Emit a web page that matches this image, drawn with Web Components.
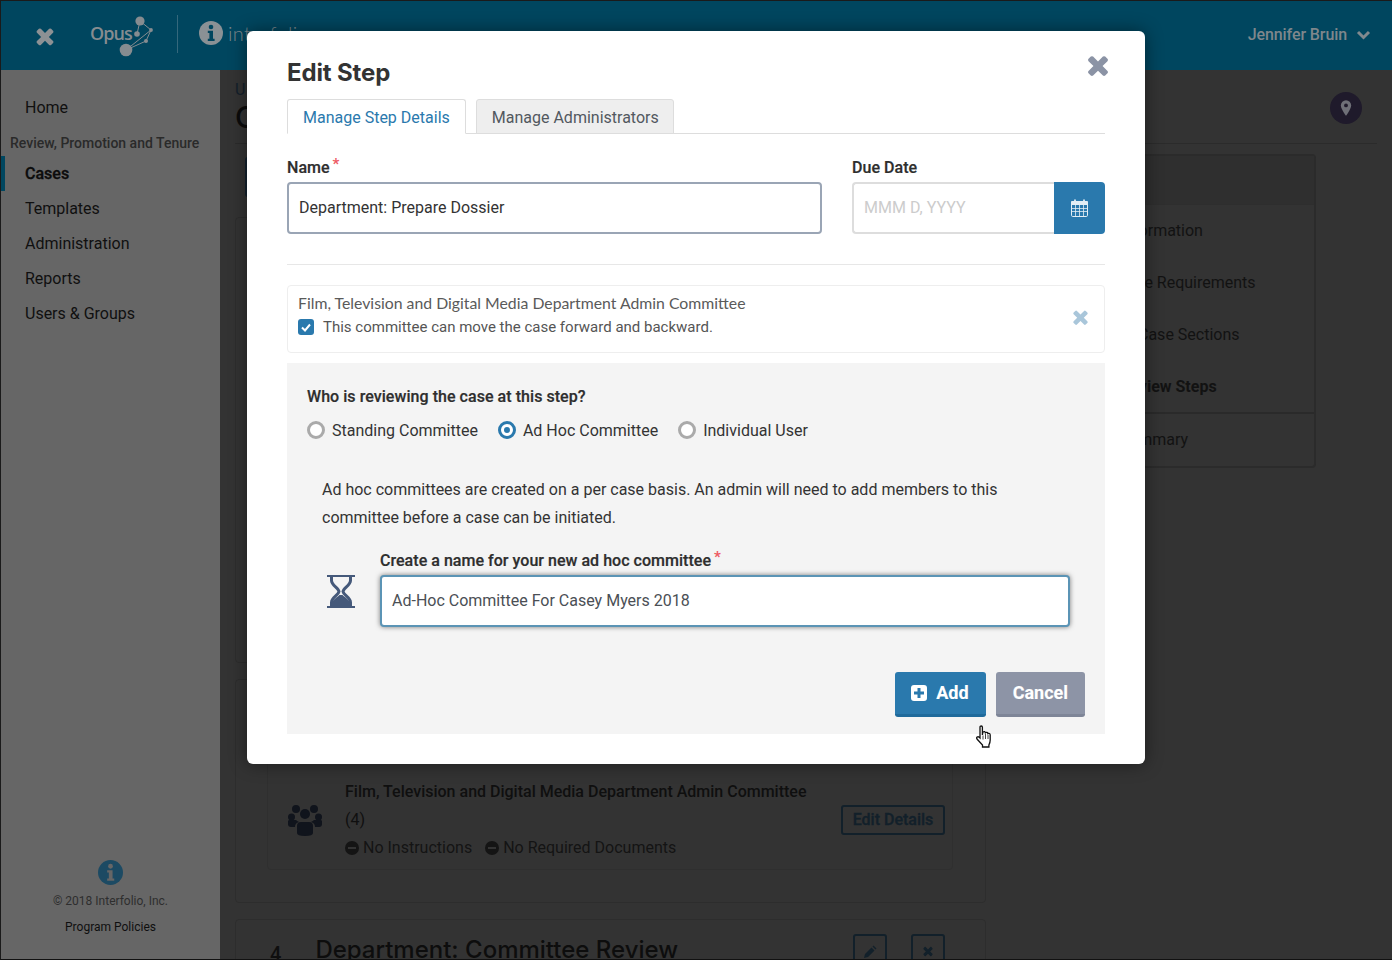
<!DOCTYPE html>
<html lang="en">
<head>
<meta charset="utf-8">
<title>Edit Step</title>
<style>
  html, body { margin: 0; height: 100%; background: #333; overflow: hidden; }
  body { font-family: Roboto, "Liberation Sans", sans-serif; font-size: 16px; }
</style>
</head>
<body>
<app-shell>
  <top-bar slot="top"></top-bar>
  <side-nav slot="side">
    <nav-item>Home</nav-item>
    <nav-group>Review, Promotion and Tenure</nav-group>
    <nav-item active>Cases</nav-item>
    <nav-item>Templates</nav-item>
    <nav-item>Administration</nav-item>
    <nav-item>Reports</nav-item>
    <nav-item>Users &amp; Groups</nav-item>
  </side-nav>
  <case-page slot="main"></case-page>
  <edit-step-dialog slot="dialog"></edit-step-dialog>
  <hand-cursor slot="dialog"></hand-cursor>
</app-shell>

<script>
const ICONS = {
  times: '<svg viewBox="0 0 1408 1792" width="100%" height="100%" fill="currentColor" style="display:block"><path d="M1298 1322q0 40-28 68l-136 136q-28 28-68 28t-68-28l-294-294-294 294q-28 28-68 28t-68-28l-136-136q-28-28-28-68t28-68l294-294-294-294q-28-28-28-68t28-68l136-136q28-28 68-28t68 28l294 294 294-294q28-28 68-28t68 28l136 136q28 28 28 68t-28 68l-294 294 294 294q28 28 28 68z"/></svg>',
  info: '<svg viewBox="0 0 24 24" width="100%" height="100%" style="display:block"><circle cx="12" cy="12" r="12" fill="currentColor"/><circle cx="12" cy="6" r="2.3" fill="var(--cut)"/><path d="M8.8 9.8h5.2v8h1.6v2.2H8.8v-2.2h1.6v-5.8H8.8z" fill="var(--cut)"/></svg>'
};

function define(name, css, html, init) {
  const tpl = document.createElement('template');
  tpl.innerHTML = `<style>${css}</style>${html}`;
  customElements.define(name, class extends HTMLElement {
    constructor() {
      super();
      this.attachShadow({ mode: 'open' }).appendChild(tpl.content.cloneNode(true));
    }
    connectedCallback() {
      if (init) init(this, this.shadowRoot);
    }
  });
}

define('app-shell', `
  :host { display: block; width: 1392px; height: 960px; box-sizing: border-box; position: relative; overflow: hidden; border: 1px solid #1a1a1a; border-right: 0; border-bottom-color: #111; background: #333; }
  .body { display: flex; height: 889px; }
`, `
  <slot name="top"></slot>
  <div class="body"><slot name="side"></slot><slot name="main"></slot></div>
  <slot name="dialog"></slot>
`);

define('top-bar', `
  :host { display: flex; align-items: center; height: 69px; background: #00465f; color: #81898e; box-sizing: border-box; }
  .close { width: 20px; height: 26px; margin-left: 34px; color: #8d9194; }
  .opus { display: flex; margin-left: 35px; align-items: center; font: 600 18px "Open Sans", sans-serif; letter-spacing: -.9px; color: #868c90; }
  .opus span { padding-bottom: 5px; width: 42px; }
  .opus svg { margin-left: -14px; }
  .sep { width: 1px; height: 38px; background: #35687c; margin: -4px 0 0 23px; }
  .info { width: 24px; height: 24px; margin: -6px 0 0 21px; color: #8a9195; --cut: #00465f; }
  .word { margin: -6px 0 0 5px; font: 300 20px Lato, sans-serif; color: #7d878c; letter-spacing: .4px; }
  .user { margin-left: auto; margin-right: 21px; display: flex; align-items: center; gap: 9px; font-weight: 500; color: #7f878c; margin-top: -2px; letter-spacing: -.1px; }
`, `
  <div class="close">${ICONS.times}</div>
  <div class="opus"><span>Opus</span>
    <svg width="36" height="42" viewBox="0 0 36 42">
      <g stroke="#868c90" stroke-width="1" fill="none"><path d="M22 6 L19 19 M22 6 L33 15 L28 26 L8 35 L33 15"/></g>
      <g fill="#868c90"><circle cx="22" cy="6" r="4.6"/><circle cx="19" cy="19" r="2.8"/><circle cx="33" cy="15" r="1.9"/><circle cx="28" cy="26" r="2"/><circle cx="8" cy="35" r="6.3"/></g>
    </svg>
  </div>
  <div class="sep"></div>
  <div class="info">${ICONS.info}</div>
  <div class="word">interfolio</div>
  <div class="user">Jennifer Bruin
    <svg width="15" height="10" viewBox="0 0 15 10"><path d="M2 2 L7.5 7.5 L13 2" fill="none" stroke="#81898e" stroke-width="3"/></svg>
  </div>
`);

define('side-nav', `
  :host { display: flex; flex-direction: column; flex: none; width: 219px; background: #666; padding-top: 20px; box-sizing: border-box; }
  .foot { margin-top: auto; padding-bottom: 24px; display: flex; flex-direction: column; align-items: center; color: #2c2c2c; font-size: 12px; }
  .i { width: 25px; height: 25px; color: #1c4a63; --cut: #666; margin-bottom: 8px; }
  .c { line-height: 16px; color: #2e2e2e; }
  .p { line-height: 16px; margin-top: 10px; color: #0f0f0f; }
`, `
  <slot></slot>
  <div class="foot">
    <div class="i">${ICONS.info}</div>
    <div class="c">© 2018 Interfolio, Inc.</div>
    <div class="p">Program Policies</div>
  </div>
`);

define('nav-item', `
  :host { display: block; height: 35px; line-height: 35px; padding-left: 24px; color: #101010; position: relative; }
  :host([active]) { color: #0c0c0c; font-weight: 500; -webkit-text-stroke: .3px #0c0c0c; }
  :host([active])::before { content: ""; position: absolute; left: 0; top: 0; width: 4px; height: 35px; background: #00465f; }
`, `<slot></slot>`);

define('nav-group', `
  :host { display: block; padding: 9px 0 0 9px; height: 31px; box-sizing: border-box; line-height: 18px; font-size: 14px; font-weight: 500; color: #2a2a2a; white-space: nowrap; }
`, `<slot></slot>`);

define('case-page', `
  :host { display: block; flex: 1; min-width: 0; background: #333; padding: 0 15px; box-sizing: border-box; position: relative; overflow: hidden; }
  .head { height: 74px; border-bottom: 1px solid #2b2b2b; display: flex; justify-content: space-between; box-sizing: border-box; }
  .sup { color: #14202b; font-size: 16px; line-height: 20px; padding-top: 10px; }
  h1 { margin: 0; font: 500 30px/34px Inter, sans-serif; color: #0b0b0b; }
  .pin { width: 32px; height: 32px; border-radius: 50%; background: #1f1a2b; margin: 22px 15px 0 0; display: flex; align-items: center; justify-content: center; }
  .cols { display: flex; }
  .left { width: 751px; flex: none; padding-top: 13px; }
  .action { width: 120px; height: 40px; background: #14222e; border-radius: 3px; margin-left: 10px; }
  .card { margin-top: 20px; height: 446px; box-sizing: border-box; border: 1px solid #2d2d2d; border-radius: 4px; }
  .card.b { margin-top: 16px; height: 224px; padding: 0 32px; position: relative; }
  .card.c { margin-top: 16px; height: 80px; display: flex; padding: 14px 40px 0 34px; align-items: flex-start; }
  .num { font-size: 20px; font-weight: 500; color: #0f0f0f; margin: 8px 34px 0 0; }
  h2 { margin: 0; font: 500 24px/32px Inter, sans-serif; color: #0d0d0d; flex: 1; white-space: nowrap; }
  .sq { width: 34px; height: 40px; box-sizing: border-box; border: 2px solid #12202a; border-radius: 3px; display: flex; justify-content: center; padding-top: 9px; color: #12202a; }
  .sq + .sq { margin-left: 24px; }
  .sq svg, .sq div { width: 14px; height: 14px; }
  .sq .t { height: 18px; width: 14px; margin-top: -1px; }
  .right { margin-left: 14px; }
`, `
  <div class="head">
    <div><div class="sup">U</div><h1>C</h1></div>
    <div class="pin"><svg width="12" height="16" viewBox="0 0 14 18"><path d="M7 0a6 6 0 0 0-6 6c0 4 6 12 6 12s6-8 6-12a6 6 0 0 0-6-6z" fill="#6f7078"/><circle cx="7" cy="6" r="2.200" fill="#1f1a2b"/></svg></div>
  </div>
  <div class="cols">
    <div class="left">
      <div class="action"></div>
      <div class="card"></div>
      <div class="card b"><committee-row></committee-row></div>
      <div class="card c">
        <span class="num">4</span>
        <h2>Department: Committee Review</h2>
        <div class="sq"><svg viewBox="0 0 14 14"><path d="M1 13l1-4 6.500-6.500 3 3L5 12zM9.500 1.500l1-1 3 3-1 1z" fill="currentColor"/></svg></div>
        <div class="sq"><div class="t">${ICONS.times}</div></div>
      </div>
    </div>
    <div class="right"><steps-panel></steps-panel></div>
  </div>
`);

define('committee-row', `
  :host { display: block; position: absolute; left: 31px; right: 32px; top: 0; height: 190px; border: 1px solid #2f2f2f; border-radius: 4px; box-sizing: border-box; padding: 97px 8px 0 77px; color: #0f0f0f; }
  .t { font-weight: 500; line-height: 28px; }
  .n { line-height: 28px; }
  .m { display: flex; line-height: 28px; color: #141414; gap: 13px; }
  .m span { display: flex; align-items: center; gap: 4px; }
  .m i { width: 14px; height: 14px; border-radius: 50%; background: #141414; position: relative; display: block; }
  .m i::after { content: ""; position: absolute; left: 3px; right: 3px; top: 6px; height: 2px; background: #333; }
  .g { position: absolute; left: 20px; top: 123px; }
  .edit { position: absolute; right: 7px; top: 124px; width: 104px; height: 30px; box-sizing: border-box; border: 2px solid #12202a; border-radius: 3px; font-weight: 500; color: #12202a; -webkit-text-stroke: .3px #12202a; text-align: center; line-height: 26px; }
`, `
  <svg class="g" width="34" height="32" viewBox="0 0 34 32" fill="#10141c">
    <circle cx="8" cy="5" r="4"/><circle cx="26" cy="5" r="4"/><circle cx="3.500" cy="13" r="3.500"/><circle cx="30.500" cy="13" r="3.500"/><circle cx="17" cy="10" r="5"/>
    <path d="M0 17q0-1 2-1h6q1 1 3 2-4 1-4 5H3q-3 0-3-3zM34 17q0-1-2-1h-6q-1 1-3 2 4 1 4 5h4q3 0 3-3z"/>
    <path d="M9 22q0-4 4-4h8q4 0 4 4v7q0 3-8 3t-8-3z"/>
  </svg>
  <div class="t">Film, Television and Digital Media Department Admin Committee</div>
  <div class="n">(4)</div>
  <div class="m"><span><i></i>No Instructions</span><span><i></i>No Required Documents</span></div>
  <div class="edit">Edit Details</div>
`);

define('steps-panel', `
  :host { display: block; width: 316px; margin-top: 10px; border: 2px solid #2b2b2b; border-radius: 4px; box-sizing: border-box; color: #121212; }
  .h { height: 49px; background: #2f2f2f; border-bottom: 1px solid #2e2e2e; box-sizing: border-box; }
  .row { height: 52px; line-height: 52px; white-space: nowrap; }
  .list { border-bottom: 2px solid #2a2a2a; height: 209px; box-sizing: border-box; }
  .sum { height: 52px; line-height: 52px; }
  b { font-weight: 700; }
`, `
  <div class="h"></div>
  <div class="list">
    <div class="row" style="padding-left:78px">Case Information</div>
    <div class="row" style="padding-left:115px">Case Requirements</div>
    <div class="row" style="padding-left:136px">Case Sections</div>
    <div class="row" style="padding-left:118px"><b>Review Steps</b></div>
  </div>
  <div class="sum" style="padding-left:78px">Case Summary</div>
`);

define('edit-step-dialog', `
  :host { display: block; position: absolute; left: 246px; top: 30px; width: 898px; height: 733px; box-sizing: border-box; padding: 26px 40px 30px; background: #fff; border-radius: 6px; box-shadow: 0 0 18px rgba(0,0,0,.45); color: #333; }
  h2 { margin: 0; height: 42px; font: 700 24px/32px Inter, sans-serif; letter-spacing: -.13px; color: #333; }
  .x { position: absolute; right: 35px; top: 19px; width: 24px; height: 30px; color: #8b93a5; }
  .tabs { display: flex; height: 35px; gap: 10px; border-bottom: 1px solid #ddd; box-sizing: border-box; }
  .row { display: flex; gap: 30px; margin-top: 24px; }
  hr { border: 0; border-top: 1px solid #e7e7e7; margin: 30px 0 20px; }
`, `
  <h2>Edit Step</h2>
  <div class="x">${ICONS.times}</div>
  <div class="tabs"><tab-link active>Manage Step Details</tab-link><tab-link style="padding-right:14px">Manage Administrators</tab-link></div>
  <div class="row">
    <form-field label="Name" required style="width:535px"><text-box>Department: Prepare Dossier</text-box></form-field>
    <form-field label="Due Date" style="width:253px"><date-box></date-box></form-field>
  </div>
  <hr>
  <admin-card></admin-card>
  <reviewer-panel></reviewer-panel>
`);

define('tab-link', `
  :host { display: block; height: 35px; box-sizing: border-box; padding: 0 15px; line-height: 35px; border: 1px solid #ddd; border-radius: 3px 3px 0 0; background: #eee; color: #52585f; }
  :host([active]) { background: #fff; border-bottom-color: #fff; color: #2a79ad; }
`, `<slot></slot>`);

define('form-field', `
  :host { display: block; flex: none; }
  label { display: block; height: 18px; line-height: 18px; margin: 1px 0 5px; font-weight: 500; color: #2e2e2e; -webkit-text-stroke: .2px #2e2e2e; letter-spacing: .03px; white-space: nowrap; }
  sup { color: #ee5b63; font-size: 15px; font-weight: 700; line-height: 0; vertical-align: 4px; margin-left: 3px; -webkit-text-stroke: 0; }
`, `<label><span id="l"></span><sup id="r">*</sup></label><slot></slot>`,
(el, root) => {
  root.getElementById('l').textContent = el.getAttribute('label');
  if (!el.hasAttribute('required')) root.getElementById('r').remove();
});

define('text-box', `
  :host { display: block; height: 52px; line-height: 48px; box-sizing: border-box; border: 2px solid #9aa5b5; border-radius: 4px; padding: 0 10px; background: #fff; color: #333; }
  :host([focused]) { border-color: #5b94b5; box-shadow: 0 0 5px rgba(0,0,0,.5); color: #4b4f55; }
`, `<slot></slot>`);

define('date-box', `
  :host { display: flex; height: 52px; }
  .f { flex: 1; box-sizing: border-box; border: 2px solid #ddd; border-right: 0; border-radius: 4px 0 0 4px; padding: 0 10px; line-height: 48px; color: #ccc; }
  .b { width: 51px; background: #2a79ad; border-radius: 0 4px 4px 0; display: flex; align-items: center; justify-content: center; }
`, `
  <div class="f">MMM D, YYYY</div>
  <div class="b"><svg width="17" height="18" viewBox="0 0 17 18" fill="none">
    <rect x=".5" y="2.500" width="16" height="15" rx="1.200" fill="#2a79ad" stroke="#e3eef5"/>
    <rect x="0" y="2" width="17" height="4" rx="1" fill="#e3eef5"/>
    <path d="M4 .5v3.500M13 .5v3.500" stroke="#e3eef5" stroke-width="1.800"/>
    <path d="M0 9.500h17M0 12.500h17M4.500 6v11M8.500 6v11M12.500 6v11" stroke="#e3eef5" stroke-width=".8"/>
  </svg></div>
`);

define('admin-card', `
  :host { display: flex; height: 68px; box-sizing: border-box; border: 1px solid #eee; border-radius: 4px; padding: 7px 10px; position: relative; color: #555; }
  .n { font: 400 15.8px/20px Lato, sans-serif; color: #5a5a5a; }
  .c { display: flex; align-items: center; gap: 9px; margin-top: 4px; line-height: 20px; font-size: 15px; }
  .b { width: 16px; height: 16px; border-radius: 3px; background: #2a79ad; display: flex; align-items: center; justify-content: center; }
  .x { position: absolute; right: 15px; top: 20px; width: 17px; height: 22px; color: #a9c6da; }
`, `
  <div>
    <div class="n">Film, Television and Digital Media Department Admin Committee</div>
    <div class="c"><span class="b"><svg width="10" height="9" viewBox="0 0 10 9"><path d="M1 4.500l3 3 5-6" fill="none" stroke="#fff" stroke-width="2"/></svg></span>This committee can move the case forward and backward.</div>
  </div>
  <div class="x">${ICONS.times}</div>
`);

define('reviewer-panel', `
  :host { display: block; margin-top: 10px; height: 371px; box-sizing: border-box; padding: 25px 20px 17px; background: #f4f4f4; color: #333; }
  .q { line-height: 18px; font-weight: 500; color: #2e2e2e; -webkit-text-stroke: .2px #2e2e2e; letter-spacing: .05px; }
  .radios { display: flex; gap: 20px; margin-top: 14px; }
  p { margin: 36px 0 0 15px; line-height: 28px; color: #333; max-width: 690px; }
  .new { display: flex; margin: 19px 15px 0 20px; gap: 25px; }
  .hg { margin-top: 24px; flex: none; }
  .new form-field { flex: 1; }
  .btns { display: flex; justify-content: flex-end; gap: 10px; margin-top: 45px; }
`, `
  <div class="q">Who is reviewing the case at this step?</div>
  <div class="radios">
    <radio-opt>Standing Committee</radio-opt>
    <radio-opt checked>Ad Hoc Committee</radio-opt>
    <radio-opt>Individual User</radio-opt>
  </div>
  <p>Ad hoc committees are created on a per case basis. An admin will need to add members to this committee before a case can be initiated.</p>
  <div class="new">
    <svg class="hg" width="28" height="33" viewBox="0 0 28 33" fill="#45597a">
      <rect x="0" y="0" width="28" height="2"/><rect x="0" y="31" width="28" height="2"/>
      <path d="M4.500 1v4.500c0 5 7 7 7.500 11-.5 4-7.500 5.500-7.500 11V32M23.500 1v4.500c0 5-7 7-7.500 11 .5 4 7.500 5.500 7.500 11V32" fill="none" stroke="#45597a" stroke-width="3"/>
      <path d="M4 31c0-5 5-8 8.500-11h3c3.500 3 8.500 6 8.500 11z"/>
    </svg>
    <form-field label="Create a name for your new ad hoc committee" required><text-box focused>Ad-Hoc Committee For Casey Myers 2018</text-box></form-field>
  </div>
  <div class="btns">
    <action-btn primary style="padding-left:16px"><svg width="16" height="16" viewBox="0 0 16 16"><rect width="16" height="16" rx="3" fill="#fff"/><path d="M6.500 3h3v3.500H13v3H9.500V13h-3V9.500H3v-3h3.500z" fill="#2a79ad"/></svg>Add</action-btn>
    <action-btn>Cancel</action-btn>
  </div>
`);

define('radio-opt', `
  :host { display: flex; align-items: center; gap: 7px; height: 20px; color: #333; }
  i { width: 18px; height: 18px; box-sizing: border-box; border: 3px solid #aaa; border-radius: 50%; background: #fff; display: block; position: relative; }
  :host([checked]) i { border-color: #2a79ad; }
  :host([checked]) i::after { content: ""; position: absolute; left: 3px; top: 3px; width: 6px; height: 6px; border-radius: 50%; background: #2a79ad; }
`, `<i></i><slot></slot>`);

define('action-btn', `
  :host { display: flex; align-items: center; justify-content: center; gap: 9px; height: 45px; box-sizing: border-box; padding: 0 17px 1px; border-radius: 3px; background: #8d94a6; border-bottom: 3px solid #7e8597; color: #fff; font-size: 18px; font-weight: 700; -webkit-text-stroke: .1px #fff; }
  :host([primary]) { background: #2a79ad; border-bottom-color: #1f6a9b; }
`, `<slot></slot>`);

define('hand-cursor', `
  :host { display: block; position: absolute; left: 975px; top: 724px; width: 17px; height: 24px; }
`, `
  <svg width="17" height="24" viewBox="0 0 17 24"><path d="M4 2.200c0-1.600 2.400-1.600 2.400 0V10l.5-3c1.200-.9 2.400-.4 2.500.8.9-.8 2.300-.5 2.500.8 1-.6 2.300 0 2.300 1.300v5c0 2-.5 3.400-1.300 5.100v2H6.500v-2L1 14c-1-1.500.7-3 2.200-1.800L4 13z" fill="#fff" stroke="#111" stroke-width="1.300"/><path d="M7 10.500v4M9.500 9v5M12 10v4" stroke="#111" stroke-width=".8"/></svg>
`);
</script>
</body>
</html>
